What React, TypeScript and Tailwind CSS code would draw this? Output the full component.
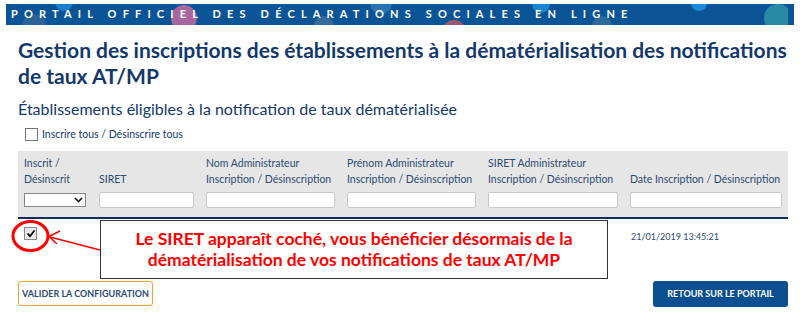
import React from 'react'

const font = { fontFamily: '"Lato", "Open Sans", sans-serif' }

const columns = [
  { label: ['Inscrit /', 'Désinscrit'], width: 'w-[75px]', select: true },
  { label: ['', 'SIRET'], width: 'w-[107px]' },
  { label: ['Nom Administrateur', 'Inscription / Désinscription'], width: 'w-[141px]' },
  { label: ['Prénom Administrateur', 'Inscription / Désinscription'], width: 'w-[141px]' },
  { label: ['SIRET Administrateur', 'Inscription / Désinscription'], width: 'w-[142px]' },
  { label: ['', 'Date Inscription / Désinscription'], width: 'flex-1' },
]

const Banner: React.FC = () => (
  <div className="relative mx-[6px] mt-[4px] h-[21px] overflow-hidden bg-[#0b5597]">
    <svg className="absolute inset-0" width="782" height="21">
      <circle cx="58" cy="-2" r="9" fill="#1d7fc7" />
      <circle cx="28" cy="22" r="12" fill="#2a6498" />
      <circle cx="178" cy="14" r="13" fill="#a7669e" />
      <circle cx="448" cy="28" r="12" fill="#9b5a72" />
      <circle cx="375" cy="-1" r="11" fill="#2b72b0" />
      <circle cx="318" cy="22" r="10" fill="#356b98" />
      <circle cx="535" cy="0" r="9" fill="#1e86cf" />
      <circle cx="596" cy="22" r="10" fill="#2e6b9a" />
      <circle cx="693" cy="-1" r="8" fill="#1f8ad4" />
      <circle cx="772" cy="14" r="14" fill="#2a8aa6" />
    </svg>
    <div className="relative flex h-full items-center whitespace-nowrap pl-[5px] text-[11px] font-bold uppercase tracking-[0.56em] text-white">
      Portail officiel des déclarations sociales en ligne
    </div>
  </div>
)

// red annotation laid over the first row
const Callout: React.FC = () => (
  <>
    <svg className="pointer-events-none absolute left-[-18px] top-0" width="110" height="60">
      <ellipse cx="30.5" cy="17" rx="17.5" ry="14.5" fill="none" stroke="#ff0000" strokeWidth="3" />
      <line x1="100" y1="31" x2="50" y2="18" stroke="#ff0000" strokeWidth="1.5" />
      <polyline points="60,12 49,17.5 57,25" fill="none" stroke="#ff0000" strokeWidth="1.5" />
    </svg>
    <div className="absolute left-[82px] top-[1px] flex h-[59px] w-[508px] flex-col items-center justify-center border border-[#333] bg-white text-[17.5px] font-bold leading-[21px] text-[#ff0000]">
      <span>Le SIRET apparaît coché, vous bénéficier désormais de la</span>
      <span>dématérialisation de vos notifications de taux AT/MP</span>
    </div>
  </>
)

export default function App() {
  return (
    <div className="h-[314px] w-[800px] overflow-hidden bg-white" style={font}>
      <Banner />
      <div className="pl-[18px] pr-[12px]">
        <h1 className="mt-[12px] text-[21px] font-bold leading-[26px] text-[#13386b]">
          Gestion des inscriptions des établissements à la dématérialisation des notifications de taux AT/MP
        </h1>
        <h2 className="mt-[10px] text-[16px] leading-[20px] text-[#13386b]">
          Établissements éligibles à la notification de taux dématérialisée
        </h2>
        <label className="mt-[8px] flex items-center gap-[4px] pl-[7px] text-[10.5px] text-[#13386b]">
          <span className="h-[13px] w-[13px] border border-[#777] bg-white" />
          Inscrire tous / Désinscrire tous
        </label>

        {/* table header */}
        <div className="mt-[8px] flex border-b-2 border-[#0f2d5c] bg-[#e6e6e6] pb-[9px] pl-[6px] pt-[4px]">
          {columns.map((c, i) => (
            <div key={i} className={`${c.width} flex flex-col whitespace-nowrap ${i === 5 ? 'pr-[6px]' : 'pr-[12px]'}`}>
              <div className="text-[10.5px] leading-[16px] text-[#2c4a72]">{c.label[0] || '\u00a0'}</div>
              <div className="text-[10.5px] leading-[16px] text-[#2c4a72]">{c.label[1]}</div>
              {c.select ? (
                <div className="mt-[6px] flex h-[14px] w-[62px] items-center justify-end border border-[#888] bg-white pr-[2px]">
                  <svg width="9" height="6" viewBox="0 0 9 6">
                    <polyline points="1,1 4.5,4.5 8,1" fill="none" stroke="#111" strokeWidth="1.6" />
                  </svg>
                </div>
              ) : (
                <div className="mt-[5px] h-[16px] rounded-[2px] border border-[#c8c8c8] bg-white" />
              )}
            </div>
          ))}
        </div>

        {/* body row */}
        <div className="relative flex h-[62px] pl-[6px] pt-[8px]">
          <div className="w-[607px]">
            <span className="flex h-[13px] w-[13px] items-center justify-center border border-[#888] bg-[#e9e9e9]">
              <svg width="10" height="9" viewBox="0 0 10 9">
                <polyline points="1.5,4.5 4,7.2 8.5,1.5" fill="none" stroke="#000" strokeWidth="1.8" />
              </svg>
            </span>
          </div>
          <div className="pt-[3px] text-[9px] text-[#2c4a72]">21/01/2019 13:45:21</div>
          <Callout />
        </div>

        <div className="flex items-center justify-between">
          <button className="h-[25px] w-[135px] rounded-[3px] border-[1.5px] border-[#f0a030] bg-white text-[9px] font-bold text-[#2c4a72]">
            VALIDER LA CONFIGURATION
          </button>
          <button className="h-[26px] w-[135px] rounded-[3px] bg-[#0b4f91] text-[9px] font-bold text-white">
            RETOUR SUR LE PORTAIL
          </button>
        </div>
      </div>
    </div>
  )
}
